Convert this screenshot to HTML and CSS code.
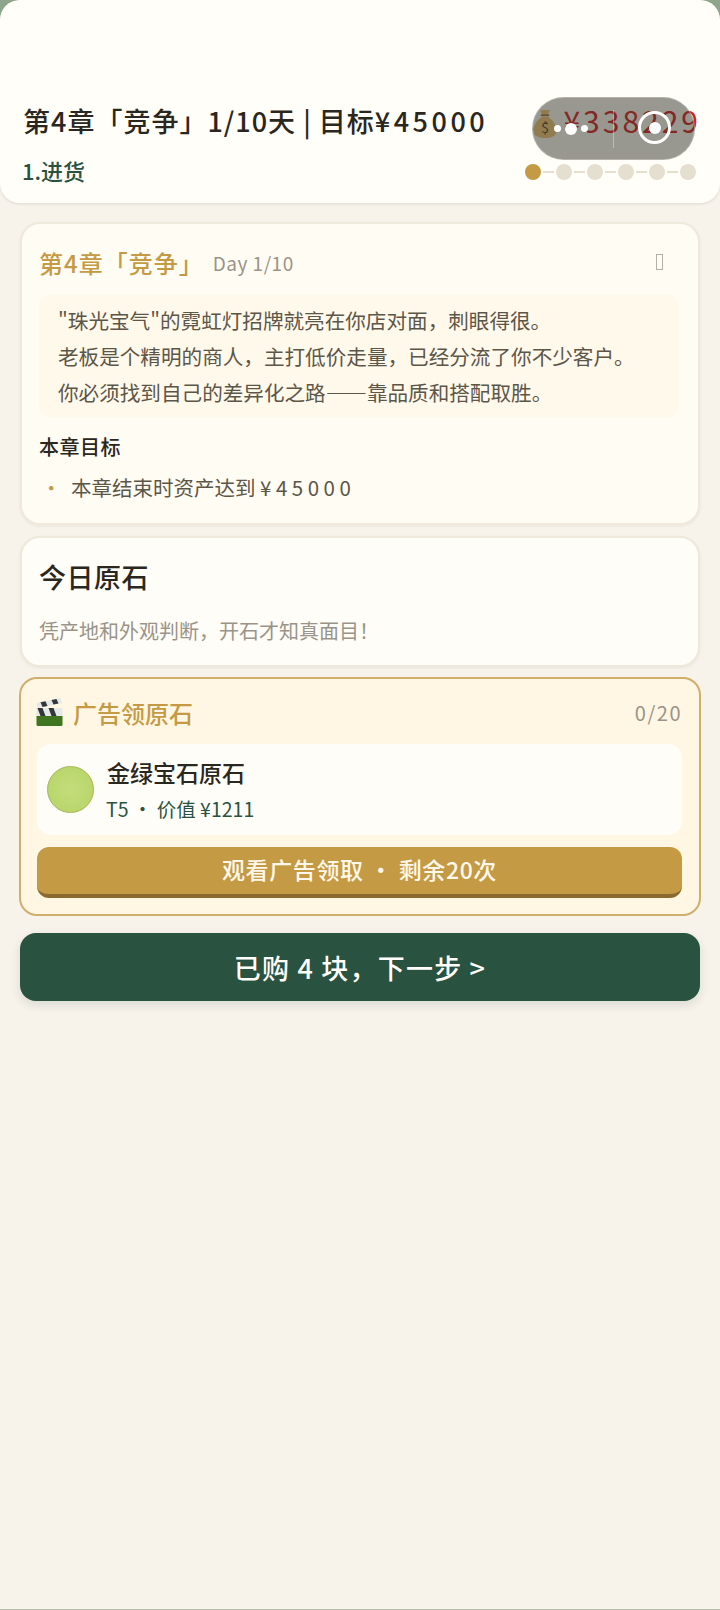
FILE: index.html
```html
<!DOCTYPE html>
<html lang="zh-CN">
<head>
  <meta charset="UTF-8" />
  <meta name="viewport" content="width=device-width, initial-scale=1.0"/>
  <title>第4章 竞争</title>
  <link rel="stylesheet" href="styles.css">
</head>
<body>

  <header class="topbar">
    <div class="topbar-row">
      <h1 class="topbar-title">第4章「竞争」1/10天 | 目标<span class="num">¥45000</span></h1>
      <div class="money">
        <svg class="money-icon" viewBox="0 0 24 30" aria-hidden="true">
          <path d="M7 1h10l-2 5H9z" fill="#f0c878"/>
          <rect x="7.5" y="5.5" width="9" height="2" rx="1" fill="#a07c3a"/>
          <path d="M9 8h6c5 3 9 9 9 14 0 6-5 8-12 8S0 28 0 22C0 17 4 11 9 8z" fill="#f0c878"/>
          <text x="12" y="25" text-anchor="middle" class="money-sign">$</text>
        </svg>
        <span class="money-value">¥338229</span>
      </div>
    </div>
    <div class="topbar-row topbar-row-low">
      <div class="step-name">1.进货</div>
      <div class="steps">
        <i class="step step-on"></i><b></b>
        <i class="step"></i><b></b>
        <i class="step"></i><b></b>
        <i class="step"></i><b></b>
        <i class="step"></i><b></b>
        <i class="step"></i>
      </div>
    </div>

    <div class="capsule">
      <div class="capsule-dots"><i></i><i class="big"></i><i></i></div>
      <div class="capsule-line"></div>
      <div class="capsule-ring"><i></i></div>
    </div>
  </header>

  <main class="content">
    <section class="card">
      <div class="chapter-head">
        <span class="chapter-name">第4章「竞争」</span>
        <span class="chapter-day">Day 1/10</span>
        <span class="tofu"></span>
      </div>
      <div class="story">
        <p>"珠光宝气"的霓虹灯招牌就亮在你店对面，刺眼得很。</p>
        <p>老板是个精明的商人，主打低价走量，已经分流了你不少客户。</p>
        <p>你必须找到自己的差异化之路——靠品质和搭配取胜。</p>
      </div>
      <h4 class="goal-title">本章目标</h4>
      <div class="goal"><span class="goal-dot">•</span><span>本章结束时资产达到 <span class="num">¥45000</span></span></div>
    </section>

    <section class="card card-today">
      <h2 class="today-title">今日原石</h2>
      <p class="today-tip">凭产地和外观判断，开石才知真面目！</p>
    </section>

    <section class="ad-card">
      <div class="ad-head">
        <svg class="ad-icon" viewBox="0 0 26 28" aria-hidden="true">
          <rect x="0" y="17" width="26" height="11" rx="1.5" fill="#3f7420"/>
          <rect x="0" y="10" width="26" height="8" fill="#e6e8e8"/>
          <path d="M1 10h5l3 8H4zM12 10h5l3 8h-5z" fill="#33363a"/>
          <path d="M0 5 24 0l1.5 5L1 10z" fill="#e6e8e8"/>
          <path d="M4 4.2 9 3.2l2 4.7-5 1zM15 2 20 1l2 4.6-5 1z" fill="#33363a"/>
        </svg>
        <span class="ad-title">广告领原石</span>
        <span class="ad-count">0/20</span>
      </div>
      <div class="stone">
        <div class="stone-pic"></div>
        <div>
          <div class="stone-name">金绿宝石原石</div>
          <div class="stone-meta">T5 · 价值 ¥1211</div>
        </div>
      </div>
      <button class="ad-btn">观看广告领取 · 剩余20次</button>
    </section>

    <button class="next-btn">已购 4 块，下一步 &gt;</button>
  </main>

</body>
</html>
```

FILE: styles.css
```css
* {
  box-sizing: border-box;
}

html {
  background: #8ea58c;
}

body {
  margin: 0;
  height: 1610px;
  overflow: hidden;
  font-family: "Noto Sans CJK SC", "Noto Sans", sans-serif;
  background: #f7f2ea;
  border-bottom: 1px solid #b9bfae;
  border-radius: 20px 20px 0 0;
  color: #2a2620;
}

h1, h2, h4, p {
  margin: 0;
}

.num {
  letter-spacing: 3.5px;
}

.topbar {
  position: relative;
  height: 203px;
  padding: 100px 22px 0 23px;
  background: #fffef9;
  border-radius: 20px;
  box-shadow: 0 1px 3px rgba(90, 80, 60, 0.14);
}

.topbar-row {
  display: flex;
  justify-content: space-between;
  align-items: center;
  height: 40px;
}

.topbar-row-low {
  margin-top: 12px;
  margin-right: 2px;
  margin-left: -1px;
}

.topbar-title {
  font-size: 27px;
  font-weight: 500;
  letter-spacing: 1px;
  white-space: nowrap;
}

.money {
  display: flex;
  align-items: center;
  gap: 6px;
  margin-right: -3px;
}

.money-icon {
  width: 24px;
  height: 29px;
  margin-top: 6px;
}

.money-sign {
  font-size: 15px;
  fill: #57492c;
}

.money-value {
  font-size: 30px;
  color: #d42020;
  letter-spacing: 3px;
}

.step-name {
  margin-top: -4px;
  font-size: 22px;
  color: #2a5240;
  font-weight: 500;
}

.steps {
  display: flex;
  align-items: center;
  gap: 2px;
}

.step {
  width: 16px;
  height: 16px;
  border-radius: 50%;
  background: #e5dfd0;
}

.step-on {
  background: #c49a45;
}

.steps b {
  width: 11px;
  height: 2px;
  background: #e5dfd0;
}

.capsule {
  position: absolute;
  top: 97px;
  left: 532px;
  width: 163px;
  height: 63px;
  display: flex;
  align-items: center;
  border-radius: 32px;
  background: rgba(50, 48, 40, 0.5);
  border: 1px solid rgba(200, 198, 190, 0.6);
}

.capsule-dots {
  display: flex;
  align-items: center;
  gap: 4px;
  margin-left: 21px;
}

.capsule-dots i {
  width: 7px;
  height: 7px;
  border-radius: 50%;
  background: #fff;
}

.capsule-dots i.big {
  width: 12px;
  height: 12px;
}

.capsule-line {
  width: 1px;
  height: 38px;
  margin-left: 25px;
  background: rgba(255, 255, 255, 0.35);
}

.capsule-ring {
  display: flex;
  align-items: center;
  justify-content: center;
  width: 33px;
  height: 33px;
  margin-left: 24px;
  margin-top: -2px;
  border: 3px solid #fff;
  border-radius: 50%;
}

.capsule-ring i {
  width: 12px;
  height: 12px;
  border-radius: 50%;
  background: #fff;
}

.content {
  display: flex;
  flex-direction: column;
  padding: 19px 20px 0;
}

.card {
  padding: 20px 19px 21px 17px;
  background: #fffcf4;
  border: 2px solid #efe9dc;
  border-radius: 20px;
  box-shadow: 0 1px 3px rgba(90, 80, 60, 0.08);
}

.chapter-head {
  display: flex;
  align-items: center;
  height: 36px;
}

.chapter-name {
  font-size: 24px;
  font-weight: 500;
  letter-spacing: 1px;
  color: #c49a45;
}

.chapter-day {
  margin-left: 9px;
  font-size: 19px;
  letter-spacing: 0.5px;
  color: #9a9488;
}

.tofu {
  width: 7px;
  height: 16px;
  margin-left: auto;
  margin-right: 16px;
  border: 1px solid #b5b0a5;
}

.story {
  margin-top: 15px;
  padding: 7px 19px;
  background: #fff9ec;
  border-radius: 10px;
  font-size: 20.6px;
  line-height: 36px;
  color: #5c5648;
  white-space: nowrap;
}

.goal-title {
  margin-top: 16px;
  font-size: 20px;
  line-height: 28px;
  font-weight: 500;
  letter-spacing: 0.5px;
}

.goal {
  display: flex;
  margin-top: 11px;
  font-size: 20.5px;
  line-height: 30px;
  color: #5c5648;
}

.goal .num {
  letter-spacing: 4.5px;
}

.goal-dot {
  width: 32px;
  padding-left: 2px;
  color: #c49a45;
}

.card-today {
  height: 131px;
  margin-top: 11px;
  background: #fffdf8;
}

.today-title {
  font-size: 27px;
  line-height: 38px;
  font-weight: 500;
  letter-spacing: 0.5px;
}

.today-tip {
  margin-top: 20px;
  font-size: 20px;
  line-height: 30px;
  color: #9a9488;
}

.ad-card {
  margin: 10px -1px 0;
  padding: 13px 17px 16px 16px;
  background: #fff6e4;
  border: 2px solid #d0ae6c;
  border-radius: 18px;
}

.ad-head {
  display: flex;
  align-items: center;
  height: 40px;
}

.ad-icon {
  width: 27px;
  height: 28px;
  margin-left: -1px;
}

.ad-title {
  margin-left: 10px;
  font-size: 24px;
  font-weight: 500;
  color: #c49a45;
}

.ad-count {
  margin-left: auto;
  font-size: 20px;
  letter-spacing: 1.5px;
  color: #9a9488;
}

.stone {
  display: flex;
  align-items: center;
  gap: 13px;
  height: 91px;
  margin-top: 12px;
  padding: 0 10px;
  background: #fffdf8;
  border-radius: 14px;
}

.stone-pic {
  width: 47px;
  height: 47px;
  border-radius: 50%;
  background: radial-gradient(circle, #c4dd7c, #b4d466);
  border: 1.5px solid #a6b552;
}

.stone-name {
  font-size: 23px;
  line-height: 34px;
  font-weight: 500;
}

.stone-meta {
  margin-top: 5px;
  margin-left: -1px;
  font-size: 19.5px;
  line-height: 30px;
  color: #2a5240;
}

.ad-btn {
  display: block;
  width: 100%;
  height: 51px;
  margin-top: 12px;
  padding: 0 0 4px;
  background: #c49a45;
  border: none;
  border-bottom: 4px solid #8b6a30;
  border-radius: 12px;
  font-family: inherit;
  font-size: 23px;
  font-weight: 500;
  letter-spacing: 0.6px;
  color: #fff8ea;
}

.next-btn {
  display: block;
  width: 100%;
  height: 68px;
  margin-top: 17px;
  background: #2a5240;
  border: none;
  border-radius: 16px;
  box-shadow: 0 4px 10px rgba(42, 82, 64, 0.14);
  font-family: inherit;
  font-size: 27px;
  font-weight: 500;
  letter-spacing: 1.2px;
  color: #fffef9;
}
```
